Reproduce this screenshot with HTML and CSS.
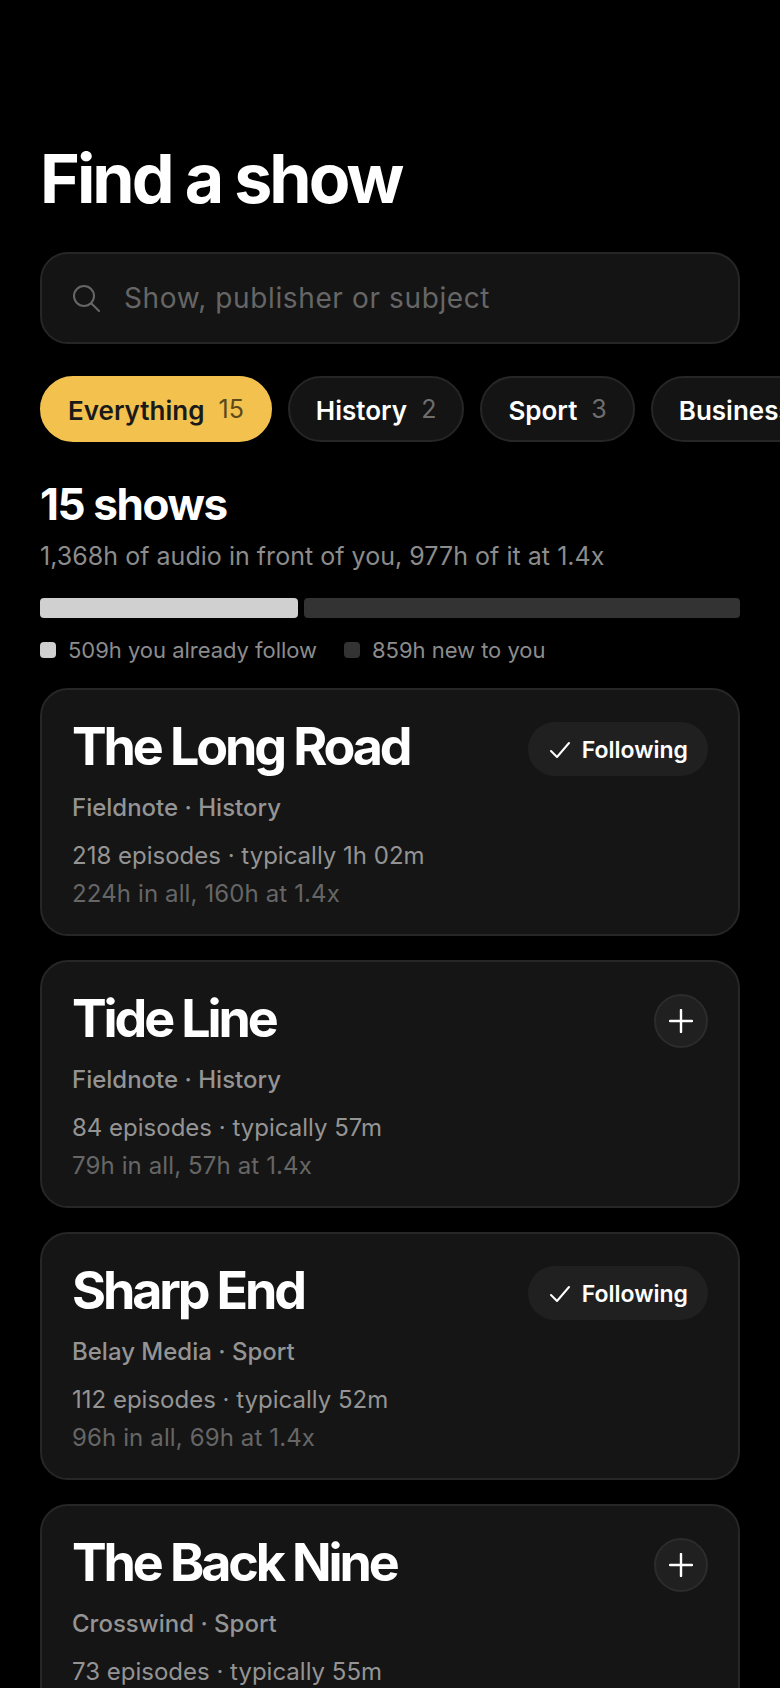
FILE: index.html
```html
<!DOCTYPE html>
<html lang="en">
<head>
<meta charset="utf-8">
<title>Find a show</title>
<link rel="stylesheet" href="styles.css">
</head>
<body>
<main class="page">
  <h1 class="title">Find a show</h1>
  <div class="search">
    <svg class="search-icon" viewBox="0 0 28 28" width="28" height="28" fill="none" stroke="currentColor" stroke-width="2" stroke-linecap="round"><circle cx="12" cy="12" r="10"/><path d="M19.5 19.5L27 27"/></svg>
    <span class="placeholder">Show, publisher or subject</span>
  </div>
  <div class="chips">
    <div class="chip chip-active"><span>Everything</span><span class="count">15</span></div>
    <div class="chip"><span>History</span><span class="count">2</span></div>
    <div class="chip"><span>Sport</span><span class="count">3</span></div>
    <div class="chip"><span>Business</span><span class="count">4</span></div>
  </div>
  <h2 class="total">15 shows</h2>
  <p class="sub">1,368h of audio in front of you, 977h of it at 1.4x</p>
  <div class="bar"><div class="bar-a"></div><div class="bar-b"></div></div>
  <div class="legend">
    <span class="legend-item"><i class="sw sw-a"></i>509h you already follow</span>
    <span class="legend-item"><i class="sw sw-b"></i>859h new to you</span>
  </div>
  <section class="list">
    <article class="card">
      <div class="card-head"><h3 class="show">The Long Road</h3>
        <div class="following"><svg viewBox="0 0 20 20" width="20" height="20" fill="none" stroke="currentColor" stroke-width="2" stroke-linecap="round" stroke-linejoin="round"><path d="M1 11l6 6L19 3"/></svg>Following</div></div>
      <p class="pub">Fieldnote · History</p>
      <p class="eps">218 episodes · typically 1h 02m</p>
      <p class="hrs">224h in all, 160h at 1.4x</p>
    </article>
    <article class="card">
      <div class="card-head"><h3 class="show">Tide Line</h3>
        <div class="add"><svg viewBox="0 0 24 24" width="24" height="24" fill="none" stroke="currentColor" stroke-width="2.4" stroke-linecap="round"><path d="M12 1v22M1 12h22"/></svg></div></div>
      <p class="pub">Fieldnote · History</p>
      <p class="eps">84 episodes · typically 57m</p>
      <p class="hrs">79h in all, 57h at 1.4x</p>
    </article>
    <article class="card">
      <div class="card-head"><h3 class="show">Sharp End</h3>
        <div class="following"><svg viewBox="0 0 20 20" width="20" height="20" fill="none" stroke="currentColor" stroke-width="2" stroke-linecap="round" stroke-linejoin="round"><path d="M1 11l6 6L19 3"/></svg>Following</div></div>
      <p class="pub">Belay Media · Sport</p>
      <p class="eps">112 episodes · typically 52m</p>
      <p class="hrs">96h in all, 69h at 1.4x</p>
    </article>
    <article class="card">
      <div class="card-head"><h3 class="show">The Back Nine</h3>
        <div class="add"><svg viewBox="0 0 24 24" width="24" height="24" fill="none" stroke="currentColor" stroke-width="2.4" stroke-linecap="round"><path d="M12 1v22M1 12h22"/></svg></div></div>
      <p class="pub">Crosswind · Sport</p>
      <p class="eps">73 episodes · typically 55m</p>
      <p class="hrs">66h in all, 47h at 1.4x</p>
    </article>
  </section>
</main>
</body>
</html>
```
FILE: styles.css
```css
* { box-sizing: border-box; }
html, body { margin: 0; height: 100%; background: #000; overflow: hidden; }
body { font-family: Inter, "Liberation Sans", sans-serif; color: #fff; }
.page { padding: 136px 40px 0; }
.title { margin: 0; font-size: 68px; line-height: 84px; font-weight: 700; letter-spacing: -3px; }
.search { margin-top: 32px; height: 92px; display: flex; align-items: center; gap: 24px; padding: 0 30px; background: #141414; border: 2px solid #262626; border-radius: 28px; color: #666; }
.search-icon { flex: none; }
.placeholder { font-size: 28px; letter-spacing: 0.62px; }
.chips { margin-top: 32px; display: flex; gap: 16px; width: 800px; }
.chip { flex: none; height: 66px; display: flex; align-items: center; gap: 14px; padding: 2px 26px 0; background: #141414; border: 2px solid #262626; border-radius: 33px; font-size: 26px; font-weight: 600; }
.chip-active { background: #f2c14e; border-color: #f2c14e; color: #1a1a1a; }
.count { margin-bottom: 2px; font-size: 25px; font-weight: 400; color: #6e6e6e; }
.chip-active .count { color: #5c4a1c; }
.total { margin: 35px 0 0; font-size: 44px; line-height: 54px; font-weight: 700; letter-spacing: -1.4px; }
.sub { margin: 7px 0 0; font-size: 25px; line-height: 36px; letter-spacing: 0.03px; color: #8c8c8c; }
.bar { margin-top: 24px; height: 20px; display: flex; gap: 6px; }
.bar-a { width: 36.86%; background: #d0d0d0; border-radius: 4px; }
.bar-b { flex: 1; background: #333; border-radius: 4px; }
.legend { margin-top: 16px; display: flex; gap: 27px; font-size: 22px; line-height: 32px; letter-spacing: -0.03px; color: #8c8c8c; }
.legend-item { display: flex; align-items: center; gap: 12px; }
.sw { width: 16px; height: 16px; border-radius: 4px; }
.sw-a { background: #d0d0d0; }
.sw-b { background: #333; }
.list { margin-top: 22px; display: flex; flex-direction: column; gap: 24px; }
.card { height: 248px; padding: 30px 30px 0; background: #151515; border: 2px solid #262626; border-radius: 28px; }
.card-head { display: flex; justify-content: space-between; align-items: flex-start; height: 54px; }
.show { margin: -3px 0 0; font-size: 52px; line-height: 60px; font-weight: 700; letter-spacing: -3.12px; }
.following { margin-top: 2px; height: 54px; display: flex; align-items: center; gap: 12px; padding: 2px 20px 0 22px; background: #202020; border-radius: 27px; font-size: 23px; font-weight: 600; }
.add { margin-top: 2px; width: 54px; height: 54px; display: flex; align-items: center; justify-content: center; background: #202020; border: 2px solid #2c2c2c; border-radius: 50%; }
.pub { margin: 18px 0 0; font-size: 24px; line-height: 32px; font-weight: 500; color: #949494; }
.eps { margin: 15px 0 0; font-size: 24px; line-height: 34px; color: #949494; }
.hrs { margin: 4px 0 0; font-size: 24px; line-height: 34px; letter-spacing: 0.12px; color: #666; }
```
